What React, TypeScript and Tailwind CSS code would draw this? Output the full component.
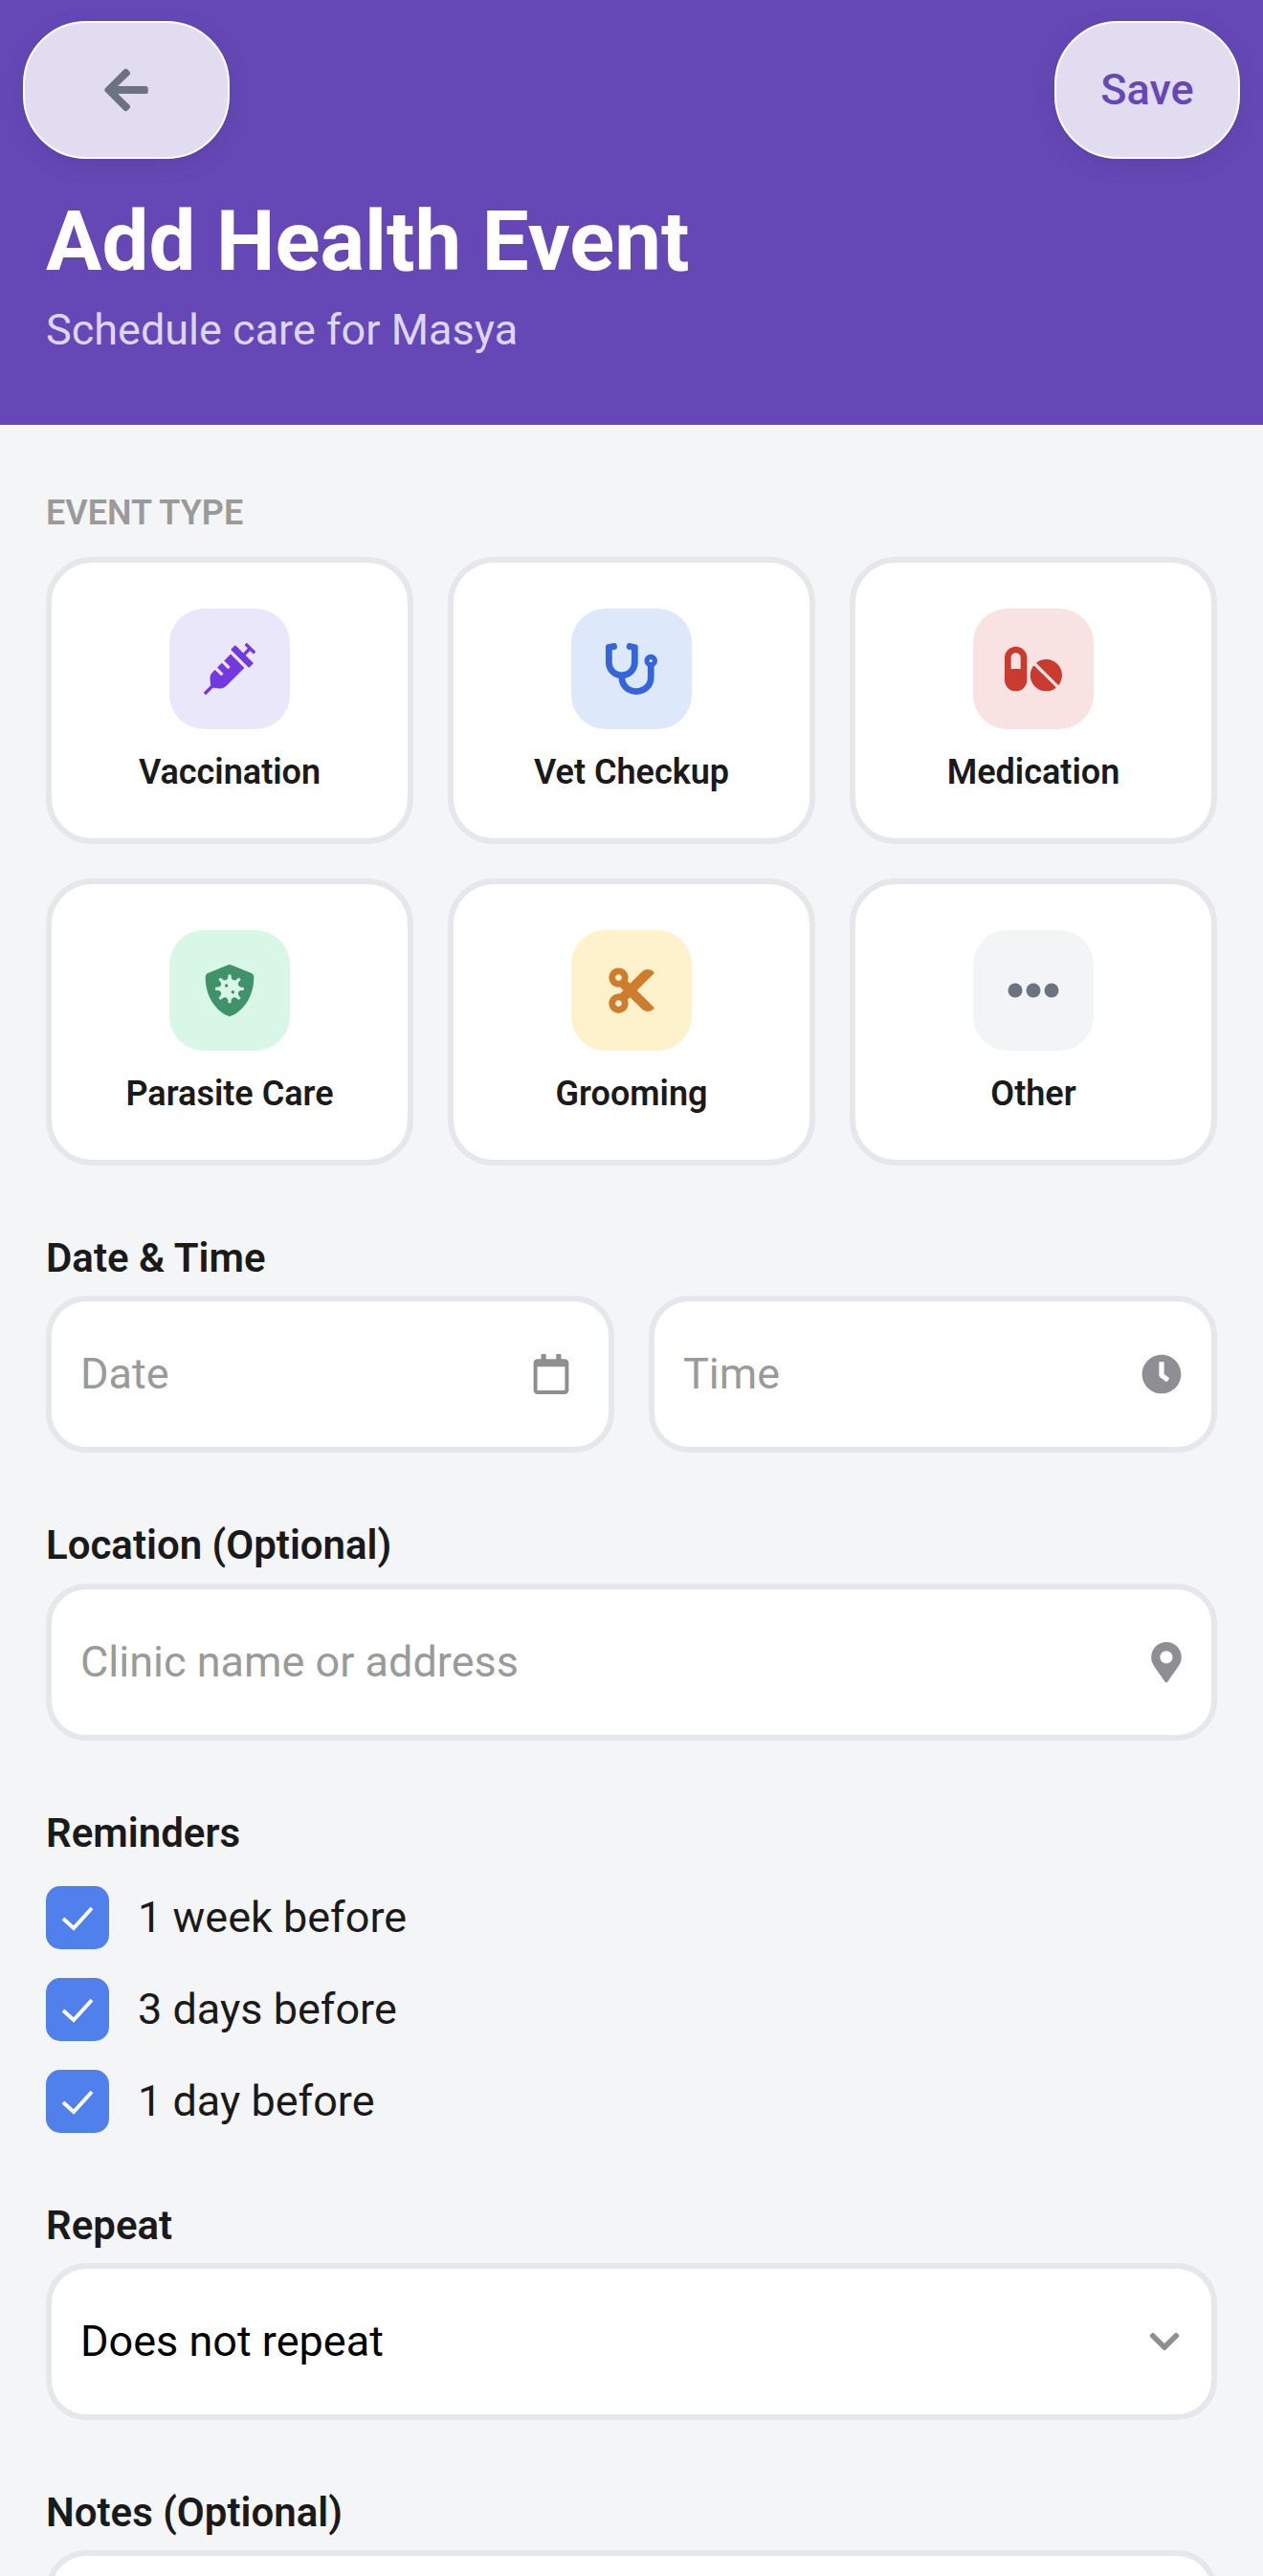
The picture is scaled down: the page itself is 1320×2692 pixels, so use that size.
import type { ReactNode } from "react";
import {
  FaArrowLeft,
  FaChevronDown,
  FaClock,
  FaCut,
  FaMapMarkerAlt,
  FaPills,
  FaRegCalendar,
  FaShieldVirus,
  FaStethoscope,
  FaSyringe,
} from "react-icons/fa";

const Dots = () => (
  <svg viewBox="0 0 54 16" className="h-[16px] w-[54px]" fill="currentColor">
    <circle cx="8" cy="8" r="7.5" />
    <circle cx="27" cy="8" r="7.5" />
    <circle cx="46" cy="8" r="7.5" />
  </svg>
);

const eventTypes = [
  { label: "Vaccination", box: "bg-[#ebe7fb]", color: "text-[#7239e0]", icon: <FaSyringe /> },
  { label: "Vet Checkup", box: "bg-[#dde8fb]", color: "text-[#3565dc]", icon: <FaStethoscope /> },
  { label: "Medication", box: "bg-[#f9e2e2]", color: "text-[#c93a2f]", icon: <FaPills className="text-[60px]" /> },
  { label: "Parasite Care", box: "bg-[#d9f7e6]", color: "text-[#3f9269]", icon: <FaShieldVirus /> },
  { label: "Grooming", box: "bg-[#fdf2cb]", color: "text-[#cd7d2c]", icon: <FaCut /> },
  { label: "Other", box: "bg-[#f3f4f6]", color: "text-[#6b7280]", icon: <Dots /> },
];

const reminders = ["1 week before", "3 days before", "1 day before"];

const Label = ({ children }: { children: ReactNode }) => (
  <div className="mb-[15px] mt-[73px] text-[42px] font-semibold leading-[48px] text-[#1a1a1a]">
    {children}
  </div>
);

const Field = ({
  text,
  icon,
  filled,
}: {
  text: string;
  icon: ReactNode;
  filled?: boolean;
}) => (
  <div className="flex h-[164px] items-center justify-between rounded-[42px] border-[6px] border-[#e5e7eb] bg-white pl-[30px] pr-[31px]">
    <span className={`text-[45px] ${filled ? "text-black" : "text-[#9a9a9a]"}`}>{text}</span>
    <span className="flex text-[42px] text-[#8e8e93]">{icon}</span>
  </div>
);

export default function App() {
  return (
    <div className="h-[2692px] overflow-hidden bg-[#f4f5f7] font-['Roboto',sans-serif]">
      <header className="h-[444px] bg-[#6548b6] pt-[22px]">
        <div className="flex justify-between px-[24px]">
          <button className="flex h-[144px] w-[216px] items-center justify-center rounded-[66px] border-[2px] border-white bg-[#e2dcf0] text-[52px] text-[#6b7280] shadow-[0_6px_24px_rgba(0,0,0,0.08)]">
            <FaArrowLeft />
          </button>
          <button className="flex h-[144px] w-[194px] items-center justify-center rounded-[66px] border-[2px] border-white bg-[#e2dcf0] text-[45px] font-medium text-[#6548b6] shadow-[0_6px_24px_rgba(0,0,0,0.08)]">
            Save
          </button>
        </div>
        <div className="px-[48px]">
          <h1 className="mt-[36px] text-[87px] font-bold leading-[100px] text-white">Add Health Event</h1>
          <p className="mt-[16px] text-[45px] leading-[54px] text-[#ddd6fe]">Schedule care for Masya</p>
        </div>
      </header>

      <main className="px-[48px]">
        <div className="mb-[22px] pt-[68px] text-[36px] font-semibold uppercase leading-[48px] text-[#9a9a9a]">
          Event Type
        </div>
        <div className="grid grid-cols-3 gap-[36px]">
          {eventTypes.map((t) => (
            <div
              key={t.label}
              className="flex h-[300px] flex-col items-center rounded-[48px] border-[6px] border-[#e5e7eb] bg-white pt-[48px]"
            >
              <div className={`flex h-[126px] w-[126px] items-center justify-center rounded-[36px] text-[54px] ${t.box} ${t.color}`}>
                {t.icon}
              </div>
              <div className="mt-[24px] text-[36px] font-semibold leading-[42px] text-[#1a1a1a]">{t.label}</div>
            </div>
          ))}
        </div>

        <Label>Date &amp; Time</Label>
        <div className="grid grid-cols-2 gap-[36px]">
          <Field text="Date" icon={<FaRegCalendar className="mr-[8px]" />} />
          <Field text="Time" icon={<FaClock />} />
        </div>

        <Label>Location (Optional)</Label>
        <div className="pt-px">
          <Field text="Clinic name or address" icon={<FaMapMarkerAlt className="-mr-[5px]" />} />
        </div>

        <Label>Reminders</Label>
        <div className="mt-[31px] flex flex-col gap-[30px]">
          {reminders.map((r) => (
            <div key={r} className="flex items-center gap-[30px]">
              <div className="h-[66px] w-[66px] rounded-[15px] bg-[#4f80ec]">
                <svg viewBox="0 0 66 66" className="h-full w-full" fill="none" stroke="white" strokeWidth="4">
                  <polyline points="18,34 29,44 48,23" />
                </svg>
              </div>
              <span className="text-[45px] leading-[66px] text-[#1a1a1a]">{r}</span>
            </div>
          ))}
        </div>

        <Label>Repeat</Label>
        <Field text="Does not repeat" icon={<FaChevronDown className="text-[36px]" />} filled />

        <Label>Notes (Optional)</Label>
        <div className="h-[300px] rounded-[42px] border-[6px] border-[#e5e7eb] bg-white" />
      </main>
    </div>
  );
}
